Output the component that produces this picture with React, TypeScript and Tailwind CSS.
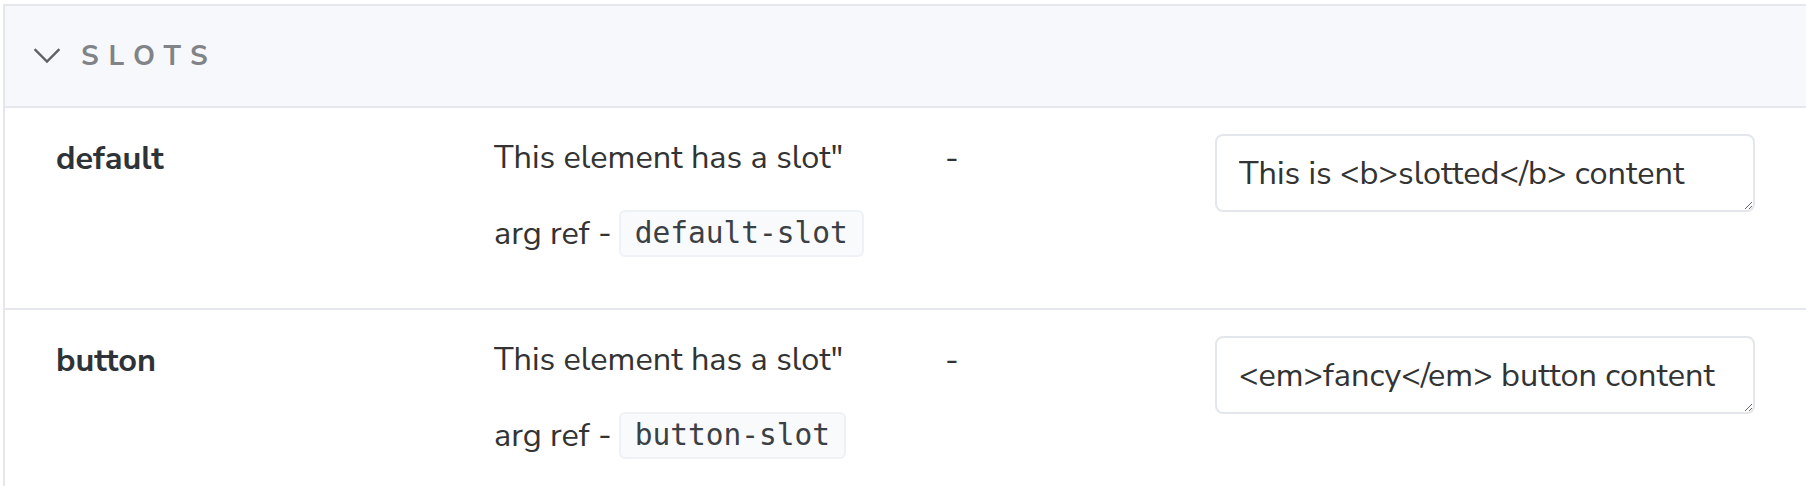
import React from 'react';

type SlotRow = {
  name: string;
  description: string;
  argRef: string;
  value: string;
};

const rows: SlotRow[] = [
  {
    name: 'default',
    description: 'This element has a slot"',
    argRef: 'default-slot',
    value: 'This is <b>slotted</b> content',
  },
  {
    name: 'button',
    description: 'This element has a slot"',
    argRef: 'button-slot',
    value: '<em>fancy</em> button content',
  },
];

const sans = { fontFamily: '"Nunito Sans", "Noto Sans", sans-serif' };

const Chevron = () => (
  <svg width="26" height="16" viewBox="0 0 26 16" fill="none">
    <polyline
      points="1.5,2 13,13.5 24.5,2"
      stroke="#5f6368"
      strokeWidth="2.4"
      strokeLinecap="square"
    />
  </svg>
);

const Row = ({ row }: { row: SlotRow }) => {
  return (
    <div className="flex border-b-2 border-[#e4e7eb] pl-[51px] pt-[26px] pb-[51px]">
      <div className="w-[438px] shrink-0 text-[32.5px] leading-[48px] font-bold text-[#2e3338]">
        {row.name}
      </div>
      <div className="w-[451px] shrink-0 pt-[1px] flex flex-col gap-[26px]">
        <p className="-mt-[2px] mb-[2px] text-[32.5px] leading-[48px] text-[#333]">{row.description}</p>
        <div className="flex items-center gap-[7px] text-[32.5px] leading-[48px] text-[#333]">
          <span>arg ref -</span>
          <code className="h-[47px] px-[14px] flex items-center rounded-[6px] border-2 border-[#eef2f6] bg-[#f8fafc] font-['DejaVu_Sans_Mono',monospace] text-[29.5px] text-[#3b4045]">
            {row.argRef}
          </code>
        </div>
      </div>
      <div className="w-[270px] shrink-0 text-[32.5px] leading-[48px] text-[#333]">-</div>
      <div className="flex-1 pr-[51px]">
        <textarea
          readOnly
          rows={1}
          defaultValue={row.value}
          style={sans}
          className="block w-full h-[78px] rounded-[8px] border-2 border-[#e3e7ec] bg-white px-[22px] pt-[13px] text-[32.5px] leading-[48px] text-[#333] outline-none resize-y"
        />
      </div>
    </div>
  );
};

export default function App() {
  return (
    <div className="w-full h-[486px] overflow-hidden bg-white pt-[4px] pl-[3px]" style={sans}>
      <div className="border-l-2 border-t-2 border-[#e4e7eb]">
        <div className="flex items-center h-[102px] bg-[#f6f8fb] border-b-2 border-[#e4e7eb] pl-[29px]">
          <Chevron />
          <span className="ml-[21px] text-[28px] font-bold tracking-[0.35em] text-[#808387]">
            SLOTS
          </span>
        </div>
        {rows.map((row) => (
          <Row key={row.name} row={row} />
        ))}
      </div>
    </div>
  );
}
